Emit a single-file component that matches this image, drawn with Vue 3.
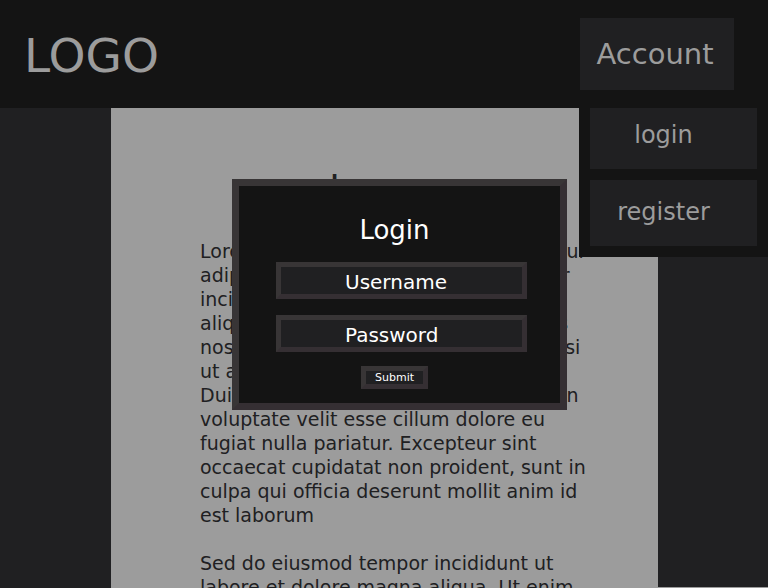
<script setup>
import { ref } from 'vue'

const username = ref('')
const password = ref('')
const links = ['login', 'register']
</script>

<template>
  <div class="page">
    <header class="bar">
      <a class="logo" href="#">LOGO</a>
      <nav class="account">
        <button class="account-button" type="button">Account</button>
        <div class="menu">
          <a v-for="link in links" :key="link" class="menu-item" :href="'#' + link">{{ link }}</a>
        </div>
      </nav>
    </header>

    <div class="columns">
      <aside class="side"></aside>
      <main class="article">
        <h1>Lorem</h1>
        <p>
          Lorem ipsum dolor sit amet, consectetur adipiscing elit, sed do eiusmod tempor
          incididunt ut labore et dolore magna aliqua. Ut enim ad minim veniam, quis
          nostrud exercitation ullamco laboris nisi ut aliquip ex ea commodo consequat.
          Duis aute irure dolor in reprehenderit in voluptate velit esse cillum dolore eu
          fugiat nulla pariatur. Excepteur sint occaecat cupidatat non proident, sunt in
          culpa qui officia deserunt mollit anim id est laborum
        </p>
        <p>
          Sed do eiusmod tempor incididunt ut labore et dolore magna aliqua. Ut enim
        </p>
      </main>
      <aside class="side side-end"></aside>
    </div>

    <form class="login" @submit.prevent>
      <h2>Login</h2>
      <input v-model="username" type="text" placeholder="Username" aria-label="Username" />
      <input v-model="password" type="password" placeholder="Password" aria-label="Password" />
      <button class="submit" type="submit">Submit</button>
    </form>
  </div>
</template>

<style>
body {
  background: #9c9c9c;
}
</style>

<style scoped>
.page {
  position: relative;
  height: 100vh;
  overflow: hidden;
  background: #9c9c9c;
  color: #202022;
  font-family: "DejaVu Sans", Verdana, sans-serif;
}

.page * {
  box-sizing: border-box;
}

.bar {
  display: flex;
  justify-content: space-between;
  align-items: flex-start;
  padding: 18px 34px 14px 24px;
  background: #141414;
}

.logo {
  color: #9c9c9c;
  font-size: 47px;
  line-height: 76px;
  text-decoration: none;
}

.account-button {
  display: block;
  width: 154px;
  height: 72px;
  padding: 0 4px 0 0;
  border: 0;
  background: #202022;
  color: #9c9c9c;
  font-family: inherit;
  font-size: 29px;
}

.menu {
  position: absolute;
  top: 108px;
  right: 0;
  z-index: 1;
  display: flex;
  flex-direction: column;
  gap: 11px;
  width: 189px;
  padding: 0 11px 11px;
  background: #141414;
}

.menu-item {
  padding: 17px 20px 19px 0;
  background: #202022;
  color: #9c9c9c;
  font-size: 24px;
  line-height: 30px;
  text-align: center;
  text-decoration: none;
}

.menu-item:first-child {
  padding-top: 12px;
}

.columns {
  display: grid;
  grid-template-columns: 111px 1fr 110px;
}

.side {
  background: #202022;
}

.side-end {
  height: calc(100vh - 109px);
}

.article {
  padding: 56px 63px 0 89px;
}

h1 {
  margin: 0 0 27px;
  padding-right: 24px;
  font-size: 36px;
  font-weight: 400;
  line-height: 48px;
  text-align: center;
}

p {
  margin: 0 0 24px;
  font-size: 19px;
  line-height: 24px;
}

.login {
  position: absolute;
  top: 179px;
  left: calc(50% - 152px);
  z-index: 2;
  display: flex;
  flex-direction: column;
  align-items: center;
  width: 335px;
  padding: 28px 33px 14px 37px;
  border: 7px solid;
  border-color: #383536 #352f33 #352f33 #383536;
  background: #141414;
  color: #fff;
}

h2 {
  margin: 0;
  padding-right: 14px;
  font-size: 26px;
  font-weight: 400;
  line-height: 32px;
}

input {
  width: 100%;
  height: 37px;
  margin: 16px 0 0;
  padding: 3px 0 0 64px;
  border: 5px solid;
  border-color: #383536 #352f33 #352f33 #383536;
  border-radius: 0;
  outline: 0;
  background: #202022;
  color: #fff;
  font-family: inherit;
  font-size: 20px;
}

input::placeholder {
  color: #fff;
  opacity: 1;
}

.submit {
  width: 67px;
  height: 23px;
  margin: 14px 14px 0 0;
  padding: 0;
  border: 5px solid;
  border-color: #383536 #352f33 #352f33 #383536;
  background: #202022;
  color: #fff;
  font-family: inherit;
  font-size: 11px;
  line-height: 13px;
}
</style>
